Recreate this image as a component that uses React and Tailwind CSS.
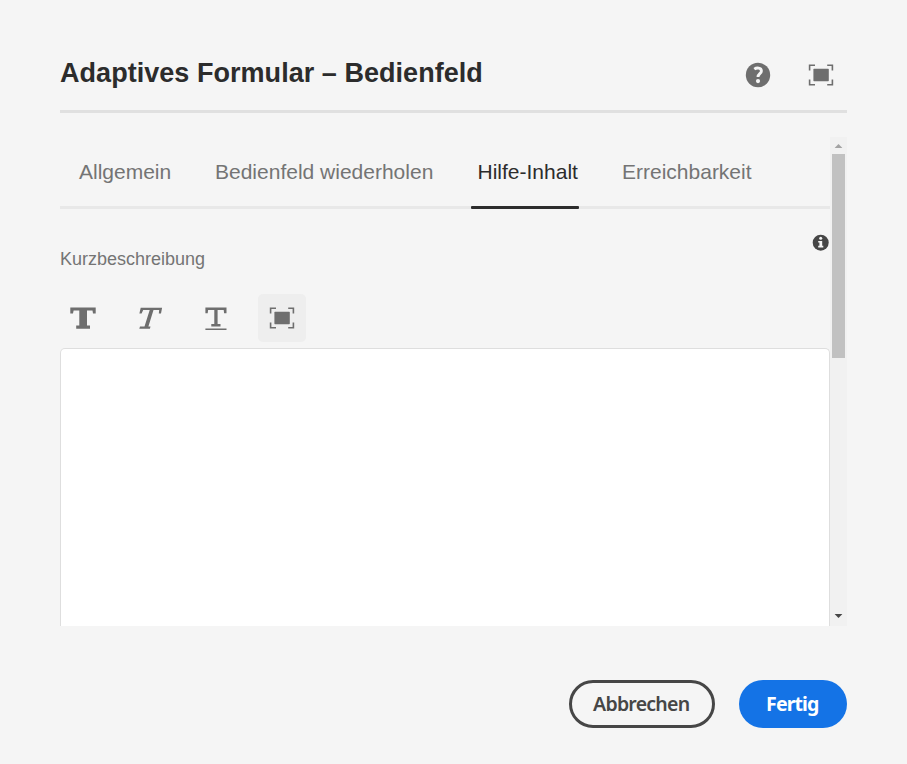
const TABS = [
  { label: "Allgemein", box: "w-[92px]" },
  { label: "Bedienfeld wiederholen", box: "w-[218.5px]" },
  { label: "Hilfe-Inhalt", box: "w-[100.5px]", active: true },
  { label: "Erreichbarkeit", box: "w-[130px]" },
];

function HelpIcon() {
  return (
    <svg width="26" height="26" viewBox="0 0 26 26" aria-hidden="true">
      <circle cx="13" cy="13" r="12.2" fill="#6e6e6e" />
      <path
        d="M9.3 7.1C11.5 5.6 16.4 5.3 16.4 9C16.4 11.7 13 11.7 13 15"
        fill="none"
        stroke="#f5f5f5"
        strokeWidth="2.9"
      />
      <circle cx="13" cy="19.1" r="2.1" fill="#f5f5f5" />
    </svg>
  );
}

function FullScreenIcon() {
  return (
    <svg width="26" height="22" viewBox="0 0 26 22" aria-hidden="true">
      <path
        d="M1.6 6.5V1.2H7M19.2 1.2H24.4V6.5M24.4 15.5V20.8H19.2M7 20.8H1.6V15.5"
        fill="none"
        stroke="#6e6e6e"
        strokeWidth="1.6"
      />
      <rect x="5.4" y="4.8" width="15.4" height="12.4" rx="0.6" fill="#6e6e6e" />
    </svg>
  );
}

function BoldIcon() {
  return (
    <svg width="26" height="24" viewBox="0 0 26 24" fill="#6e6e6e" aria-hidden="true">
      <path d="M0.3 0.5H25.7V6.6H23L22.5 3.6H17V18.6H20V21.8H6.2V18.6H9.3V3.6H3.6L3 6.6H0.3Z" />
    </svg>
  );
}

function ItalicIcon() {
  return (
    <svg width="24" height="24" viewBox="0 0 24 24" fill="#6e6e6e" aria-hidden="true">
      <path d="M1.7 0.7H23.1L22 6.5H19.8L20.2 3H14.5L9.4 19.4H11.5L10.9 21.8H0.3L1 19.4H5.5L10.7 3H4.2L2.6 6.5H0.4Z" />
    </svg>
  );
}

function UnderlineIcon() {
  return (
    <svg width="22" height="24" viewBox="0 0 22 24" fill="#6e6e6e" aria-hidden="true">
      <path d="M0.4 0.5H21.5V6.3H19.1L18.7 3H12.6V17H15.5V19.4H6.3V17H9.3V3H3.1L2.7 6.3H0.4Z" />
      <rect x="0.4" y="21.5" width="21.1" height="1.5" />
    </svg>
  );
}

function InfoIcon() {
  return (
    <svg width="18" height="18" viewBox="0 0 18 18" aria-hidden="true">
      <circle cx="8.7" cy="8.7" r="8" fill="#464646" />
      <circle cx="8.7" cy="4.3" r="1.5" fill="#f5f5f5" />
      <path d="M6.2 6.9H10.2V11.8H11.3V13.4H6.2V11.8H7.4V8.5H6.2Z" fill="#f5f5f5" />
    </svg>
  );
}

export default function App() {
  return (
    <div className="flex h-[764px] w-[907px] flex-col overflow-hidden bg-[#f5f5f5] pl-[60px] pr-[60px] font-['Liberation_Sans',Arial,sans-serif]">
      <header className="flex h-[113px] shrink-0 items-start justify-between border-b-[3px] border-[#e0e0e0] pt-[57px]">
        <h1 className="whitespace-nowrap text-[27px] font-bold leading-8 tracking-[0.04px] text-[#2c2c2c]">
          Adaptives Formular – Bedienfeld
        </h1>
        <div className="flex items-center gap-[37px] pr-[13px] pt-[5px]">
          <HelpIcon />
          <FullScreenIcon />
        </div>
      </header>

      <main className="mt-[24px] flex h-[489px] shrink-0 overflow-hidden">
        <section className="flex w-[770px] flex-col">
          <nav className="flex h-[72px] shrink-0 gap-[44px] border-b-[3px] border-[#e8e8e8] pl-[19px]">
            {TABS.map((tab) => (
              <div
                key={tab.label}
                className={
                  "relative h-[72px] whitespace-nowrap pt-[22px] text-[21px] leading-[26px] " +
                  tab.box +
                  (tab.active ? " text-[#2c2c2c]" : " text-[#747474]")
                }
              >
                {tab.label}
                {tab.active && (
                  <span className="absolute -left-[6.5px] bottom-0 h-[3px] w-[108px] rounded-[1px] bg-[#2c2c2c]" />
                )}
              </div>
            ))}
          </nav>

          <div className="flex h-[85px] shrink-0 items-start justify-between">
            <label className="pt-[39px] text-[18px] leading-[22px] text-[#747474]">Kurzbeschreibung</label>
            <span className="pt-[25px]">
              <InfoIcon />
            </span>
          </div>

          <div className="flex h-[54px] shrink-0">
            <div className="flex w-[79px] pl-[10px] pt-[13px]">
              <BoldIcon />
            </div>
            <div className="flex w-[66px] pt-[13px]">
              <ItalicIcon />
            </div>
            <div className="flex w-[53px] pt-[13px]">
              <UnderlineIcon />
            </div>
            <div className="flex size-[48px] items-center justify-center rounded-[5px] bg-[#eeeeee]">
              <FullScreenIcon />
            </div>
          </div>

          <div className="grow rounded-t-[5px] border border-b-0 border-[#dedede] bg-white" />
        </section>

        <aside className="flex w-[17px] flex-col items-center bg-[#f1f1f1]">
          <svg width="17" height="17" viewBox="0 0 17 17" aria-hidden="true">
            <path d="M4.6 11L8.5 7L12.4 11Z" fill="#a3a3a3" />
          </svg>
          <div className="h-[204px] w-[13px] bg-[#c1c1c1]" />
          <svg className="mt-auto" width="17" height="17" viewBox="0 0 17 17" aria-hidden="true">
            <path d="M4.6 5L8.5 9L12.4 5Z" fill="#464646" />
          </svg>
        </aside>
      </main>

      <footer className="mt-[53.5px] flex justify-end gap-[24px] font-['Noto_Sans',sans-serif] text-[19.5px] font-semibold">
        <button className="flex h-[48px] w-[145.5px] items-center justify-center whitespace-nowrap rounded-full border-[3px] border-[#464646] pr-[1px] tracking-[-0.75px] text-[#464646]">
          Abbrechen
        </button>
        <button className="flex h-[48px] w-[108.5px] items-center justify-center whitespace-nowrap rounded-full bg-[#1473e6] pr-[1px] font-bold tracking-[-0.9px] text-white">
          Fertig
        </button>
      </footer>
    </div>
  );
}
